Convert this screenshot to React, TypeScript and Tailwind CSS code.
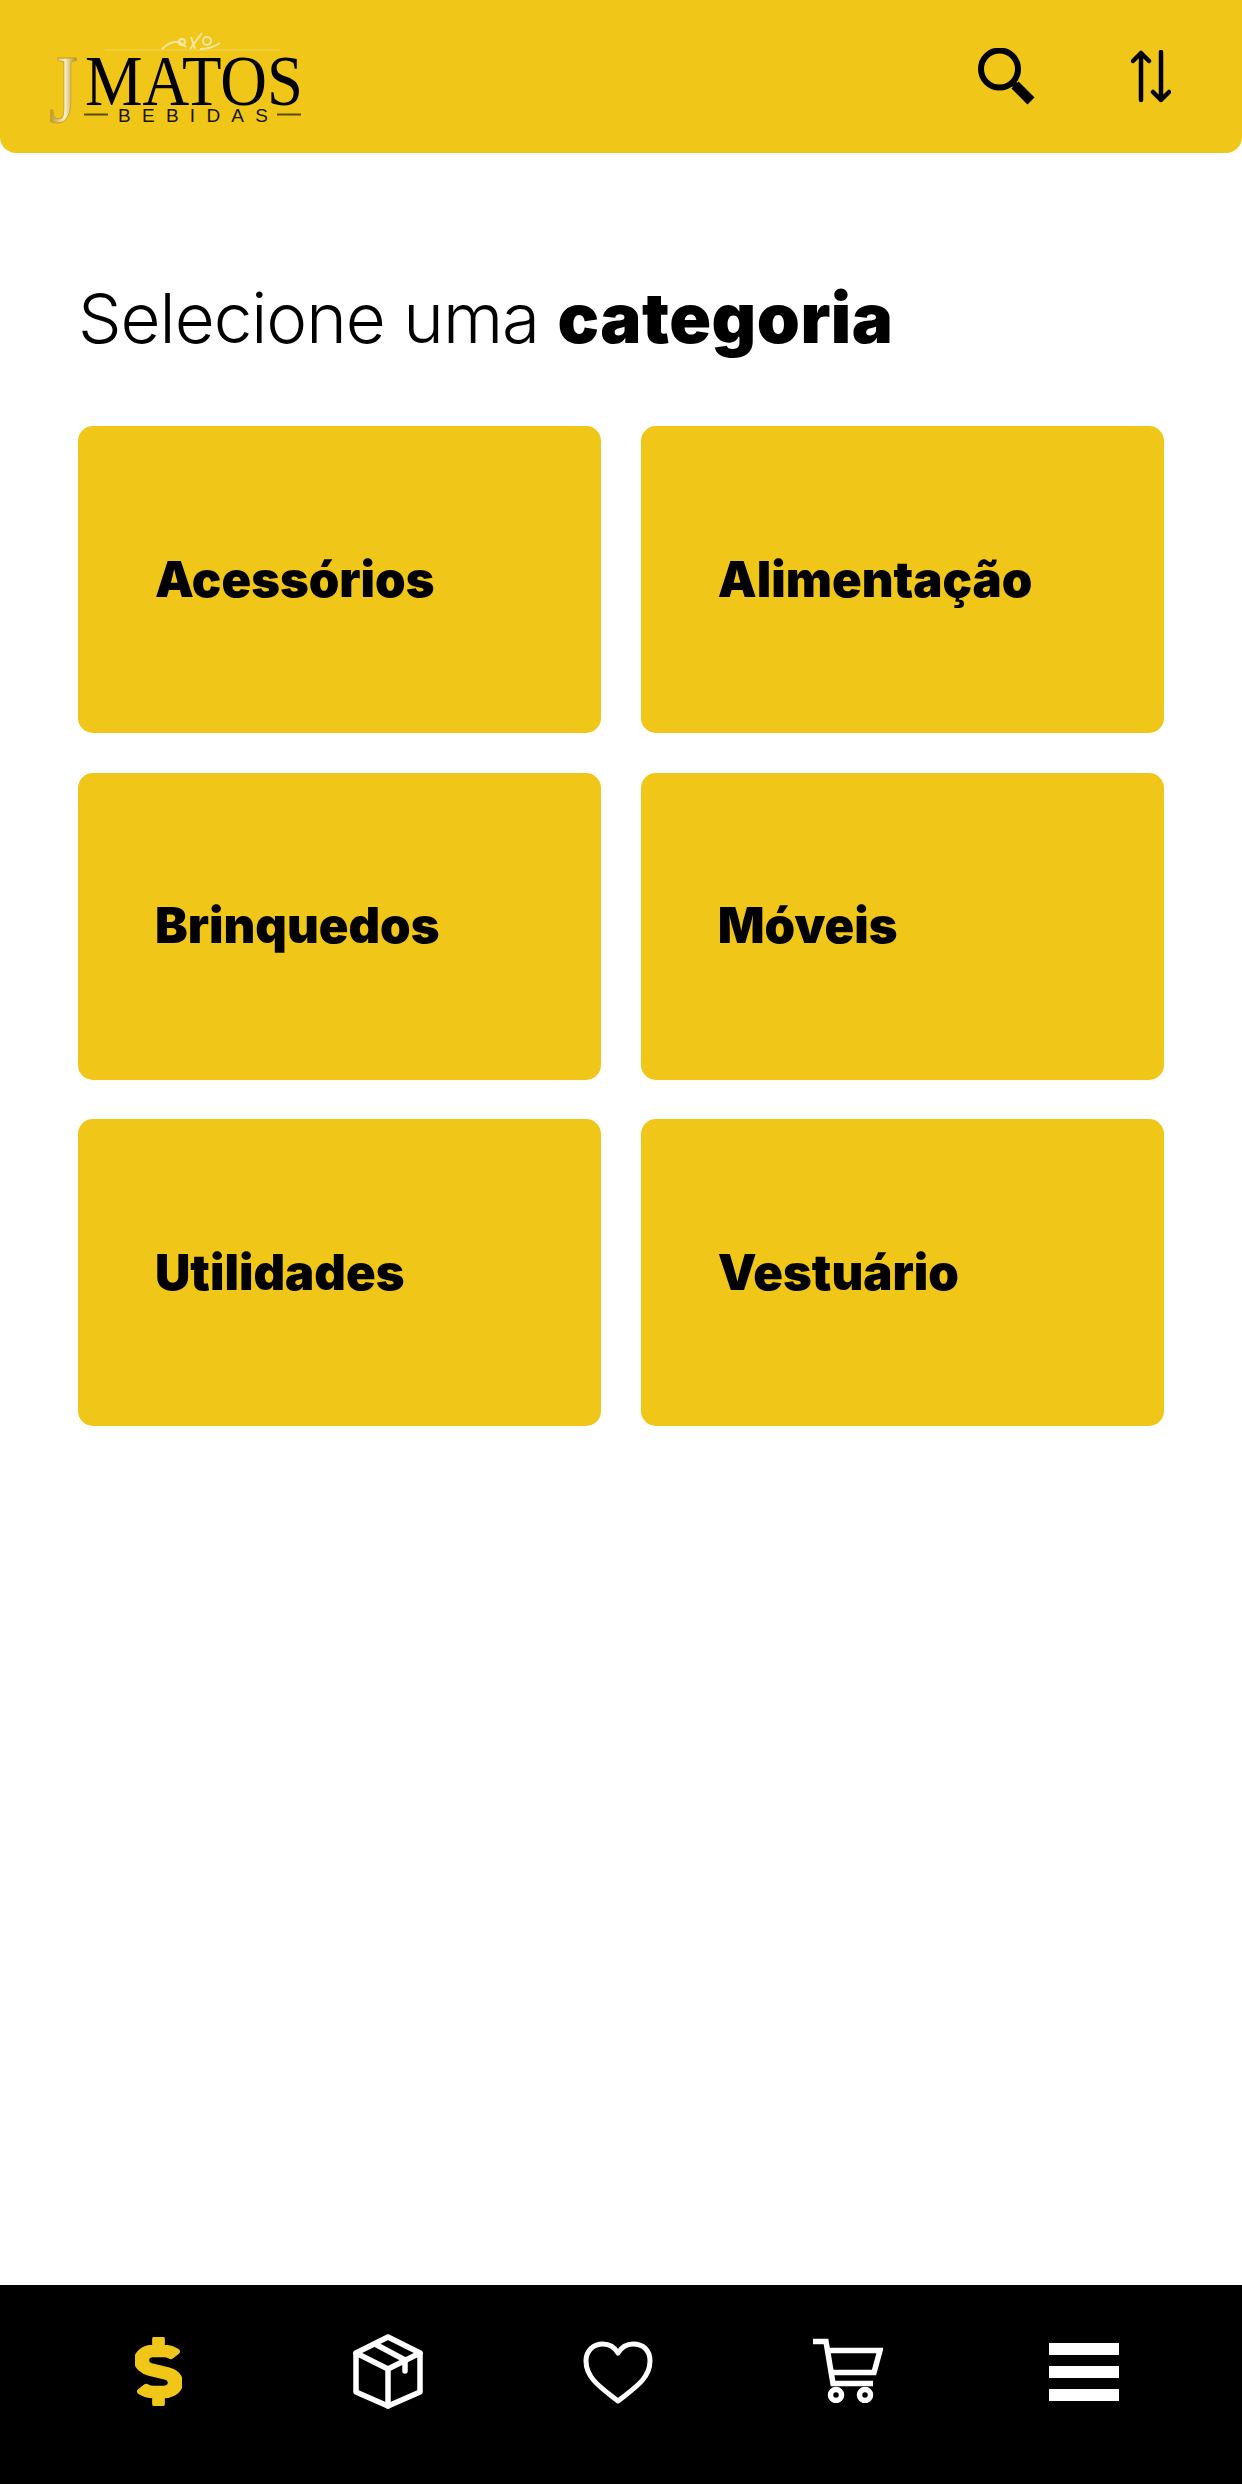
import React from 'react';
import { FaDollarSign } from 'react-icons/fa';

const categories = ['Acessórios', 'Alimentação', 'Brinquedos', 'Móveis', 'Utilidades', 'Vestuário'];

const Logo = () => (
  <svg width="320" height="130" viewBox="0 0 320 130" className="ml-[40px] mt-[12px] shrink-0">
    <defs>
      <linearGradient id="gold" x1="0" x2="1" y1="0" y2="0">
        <stop offset="0" stopColor="#b8901c" />
        <stop offset="0.55" stopColor="#f8efc8" />
        <stop offset="1" stopColor="#a98414" />
      </linearGradient>
    </defs>
    <path d="M65 38h175" stroke="#f3d655" strokeWidth="1" />
    <g fill="none" stroke="#f6e7a6" strokeWidth="2">
      <path d="M122 37c8-8 16-10 24-2" />
      <circle cx="142" cy="30" r="3" />
      <circle cx="167" cy="29" r="4" />
      <path d="M150 37l12-16M155 37l-4-12M160 37c8 0 14-2 20-6" />
    </g>
    <text x="9" y="110" fill="url(#gold)" stroke="#c29a1e" strokeWidth="0.8" fontFamily="'Liberation Serif', serif" fontSize="97" textLength="29" lengthAdjust="spacingAndGlyphs">J</text>
    <text x="45" y="93" fill="#000" fontFamily="'Liberation Serif', serif" fontSize="71" textLength="218" lengthAdjust="spacingAndGlyphs">MATOS</text>
    <text x="78" y="110" fill="#1a1400" fontFamily="'Liberation Sans', sans-serif" fontSize="19" textLength="150" lengthAdjust="spacing">BEBIDAS</text>
    <path d="M44 102.500h24M237 102.500h24" stroke="#5a4a10" strokeWidth="2" />
  </svg>
);

const SearchIcon = () => (
  <svg width="57" height="57" viewBox="0 0 57 57" fill="none" stroke="#000">
    <circle cx="21.500" cy="21" r="18.500" strokeWidth="6" />
    <path d="M33 33l6 6" strokeWidth="6" />
    <path d="M37 37l16 16" strokeWidth="10" />
  </svg>
);

const SortIcon = () => (
  <svg width="40" height="53" viewBox="0 0 40 53" fill="none" stroke="#000" strokeWidth="4.500" strokeLinecap="round" strokeLinejoin="round">
    <path d="M10 50V3M2 11l8-8 8 8" />
    <path d="M30 2v48M22 42l8 8 8-8" />
  </svg>
);

const BoxIcon = () => (
  <svg width="70" height="75" viewBox="0 0 70 75" fill="none" stroke="#fff" strokeWidth="5.500" strokeLinejoin="round" strokeLinecap="round">
    <path d="M35 3l32 16v39L35 72 3 58V19z" />
    <path d="M3 19l32 16 32-16M35 35v37" />
    <path d="M22 10l30 16v11" />
  </svg>
);

const HeartIcon = () => (
  <svg width="70" height="64" viewBox="0 0 70 64" fill="none" stroke="#fff" strokeWidth="5" strokeLinejoin="round">
    <path d="M35 60C20 48 3 38 3 20 3 9 11 3 20 3c7 0 12 4 15 9 3-5 8-9 15-9 10 0 17 6 17 17 0 18-17 28-32 40z" />
  </svg>
);

const CartIcon = () => (
  <svg width="70" height="65" viewBox="0 0 70 65" fill="none" stroke="#fff" strokeWidth="5.500">
    <path d="M0 3.500h13l7 42h40" />
    <path d="M15 12.500h52l-6 22H19" />
    <circle cx="23" cy="57" r="5.500" />
    <circle cx="52" cy="57" r="5.500" />
  </svg>
);

const MenuIcon = () => (
  <div className="flex w-[70px] flex-col gap-[11px]">
    <div className="h-[12px] bg-white" />
    <div className="h-[12px] bg-white" />
    <div className="h-[12px] bg-white" />
  </div>
);

export default function App() {
  return (
    <div className="flex h-[2484px] w-[1242px] flex-col bg-white text-black font-['Inter',sans-serif]">
      <header className="flex h-[153px] items-start justify-between rounded-b-[16px] bg-[#f0c618]">
        <Logo />
        <div className="flex items-start">
          <div className="mt-[48px]"><SearchIcon /></div>
          <div className="ml-[96px] mr-[71px] mt-[50px]"><SortIcon /></div>
        </div>
      </header>

      <main className="flex-1 px-[78px]">
        <h1 className="mt-[122px] text-[69px] leading-[86px] font-light tracking-[-1px]">
          Selecione uma <span className="font-black tracking-[0.5px]">categoria</span>
        </h1>
        <div className="mt-[65px] grid grid-cols-2 gap-[39.5px]">
          {categories.map((name) => (
            <div key={name} className="flex h-[307px] items-center rounded-[15px] bg-[#f0c618] pl-[77px] text-[49px] font-black">
              {name}
            </div>
          ))}
        </div>
      </main>

      <footer className="flex h-[199px] items-start bg-black pl-[123px]">
        <div className="mt-[52px] flex w-[70px] justify-center text-[#f0c618]">
          <FaDollarSign size={47} preserveAspectRatio="none" stroke="currentColor" strokeWidth={14} style={{ height: 69 }} />
        </div>
        <div className="ml-[160px] mt-[49px]"><BoxIcon /></div>
        <div className="ml-[160px] mt-[56px]"><HeartIcon /></div>
        <div className="ml-[160px] mt-[53px]"><CartIcon /></div>
        <div className="ml-[166px] mt-[58px]"><MenuIcon /></div>
      </footer>
    </div>
  );
}
